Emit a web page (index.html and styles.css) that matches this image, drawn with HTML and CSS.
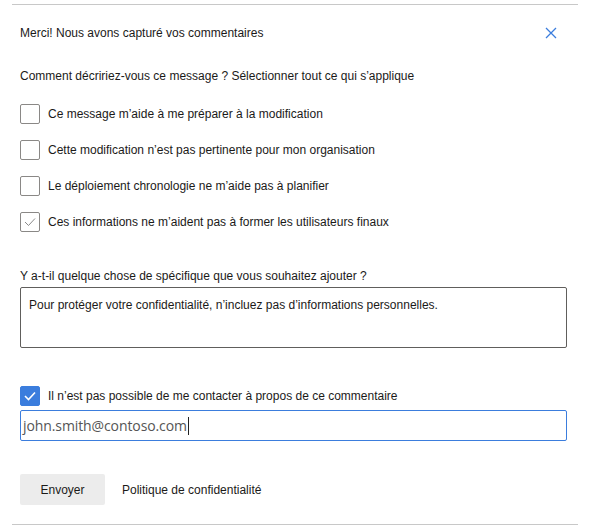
FILE: index.html
```html
<!DOCTYPE html>
<html lang="fr">
<head>
<meta charset="utf-8">
<link rel="stylesheet" href="styles.css">
</head>
<body>
<div class="panel">
  <div class="rule"></div>
  <div class="content">
    <div class="header">
      <span class="title">Merci! Nous avons capturé vos commentaires</span>
      <svg class="close" width="12" height="12" viewBox="0 0 12 12"><path d="M1 1 L11 11 M11 1 L1 11" stroke="#3b7ddd" stroke-width="1.3" fill="none"/></svg>
    </div>
    <div class="question">Comment décririez-vous ce message ? Sélectionner tout ce qui s’applique</div>
    <div class="options">
      <label class="option"><span class="box"></span><span>Ce message m’aide à me préparer à la modification</span></label>
      <label class="option"><span class="box"></span><span>Cette modification n’est pas pertinente pour mon organisation</span></label>
      <label class="option"><span class="box"></span><span>Le déploiement chronologie ne m’aide pas à planifier</span></label>
      <label class="option"><span class="box checked"><svg width="12" height="10" viewBox="0 0 12 10"><path d="M1 5 L4.5 8.5 L11 1.5" stroke="#8a8a8a" stroke-width="1" fill="none"/></svg></span><span>Ces informations ne m’aident pas à former les utilisateurs finaux</span></label>
    </div>
    <div class="label2">Y a-t-il quelque chose de spécifique que vous souhaitez ajouter ?</div>
    <div class="textarea">Pour protéger votre confidentialité, n’incluez pas d’informations personnelles.</div>
    <label class="contact"><span class="box blue"><svg width="12" height="10" viewBox="0 0 12 10"><path d="M1 5 L4.5 8.5 L11 1.5" stroke="#fff" stroke-width="1.6" fill="none"/></svg></span><span>Il n’est pas possible de me contacter à propos de ce commentaire</span></label>
    <div class="email"><span>john.smith@contoso.com</span><span class="caret"></span></div>
    <div class="actions">
      <button class="send">Envoyer</button>
      <span class="policy">Politique de confidentialité</span>
    </div>
  </div>
  <div class="rule bottom"></div>
</div>
</body>
</html>
```

FILE: styles.css
```css
html, body {
  margin: 0;
  padding: 0;
  background: #fff;
}
body {
  font-family: "Liberation Sans", Arial, sans-serif;
  font-size: 12px;
  color: #1b1a19;
}
.panel {
  width: 594px;
  height: 529px;
  padding-top: 4px;
  box-sizing: border-box;
}
.rule {
  height: 1px;
  background: #c8c8c8;
  margin: 0 16px 0 12px;
}
.rule.bottom {
  margin-top: 19px;
}
.content {
  padding: 0 27px 0 20px;
  display: flex;
  flex-direction: column;
}
.header {
  display: flex;
  align-items: center;
  justify-content: space-between;
  height: 56px;
}
.close {
  margin-right: 10px;
}
.question {
  margin-top: 8px;
  line-height: 14px;
}
.options {
  display: flex;
  flex-direction: column;
  gap: 16px;
  margin-top: 21px;
}
.option, .contact {
  display: flex;
  align-items: center;
  gap: 8px;
  height: 20px;
}
.box {
  width: 18px;
  height: 18px;
  border: 1px solid #8a8886;
  border-radius: 2px;
  display: flex;
  align-items: center;
  justify-content: center;
  flex: none;
}
.box.blue {
  background: #3b7ddd;
  border-color: #3b7ddd;
}
.label2 {
  margin-top: 37px;
  line-height: 14px;
}
.textarea {
  margin-top: 4px;
  border: 1px solid #605e5c;
  border-radius: 2px;
  padding: 10px 8px 0;
  height: 49px;
  font-size: 12px;
}
.contact {
  margin-top: 38px;
}
.email {
  margin-top: 4px;
  height: 29px;
  border: 1px solid #3b7ddd;
  border-radius: 2px;
  display: flex;
  align-items: center;
  padding-left: 2px;
  font-family: "Open Sans", sans-serif;
  font-size: 14px;
  color: #555;
  letter-spacing: -0.1px;
}
.caret {
  width: 1px;
  height: 18px;
  background: #222;
  margin-left: 1px;
}
.actions {
  margin-top: 33px;
  display: flex;
  align-items: center;
  gap: 17px;
}
.send {
  width: 85px;
  height: 31px;
  border: none;
  border-radius: 2px;
  background: #ececec;
  font-family: "Liberation Sans", Arial, sans-serif;
  font-size: 12px;
  color: #1b1a19;
  padding: 0;
}
```
